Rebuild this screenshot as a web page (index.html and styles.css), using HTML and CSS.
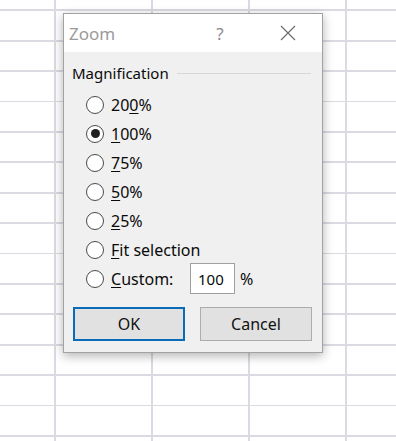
FILE: index.html
```html
<!DOCTYPE html>
<html>
<head>
    <title>Zoom</title>
    <meta charset="UTF-8">
    <link rel="stylesheet" href="styles.css">
</head>
<body>
    <div class="sheet">
        <div class="dialog">
            <div class="titlebar">
                <span class="title">Zoom</span>
                <span class="help">?</span>
                <svg class="close" width="16" height="16" viewBox="0 0 16 16">
                    <path d="M1 1L15 15M15 1L1 15" stroke="#6d6d6d" stroke-width="1.2" fill="none"/>
                </svg>
            </div>
            <div class="content">
                <div class="group-head">
                    <span class="group-title">Magnification</span>
                    <span class="rule"></span>
                </div>
                <div class="options">
                    <div class="option"><span class="radio"></span><span>20<u>0</u>%</span></div>
                    <div class="option"><span class="radio checked"></span><span><u>1</u>00%</span></div>
                    <div class="option"><span class="radio"></span><span><u>7</u>5%</span></div>
                    <div class="option"><span class="radio"></span><span><u>5</u>0%</span></div>
                    <div class="option"><span class="radio"></span><span><u>2</u>5%</span></div>
                    <div class="option"><span class="radio"></span><span><u>F</u>it selection</span></div>
                    <div class="option">
                        <span class="radio"></span>
                        <span class="custom-label"><u>C</u>ustom:</span>
                        <span class="num-box">100</span>
                        <span class="pct">%</span>
                    </div>
                </div>
                <div class="buttons">
                    <button class="btn btn-default">OK</button>
                    <button class="btn">Cancel</button>
                </div>
            </div>
        </div>
    </div>
</body>
</html>
```

FILE: styles.css
```css
body {
    margin: 0;
    font-family: 'Noto Sans', 'Open Sans', sans-serif;
    background-color: white;
}

/* spreadsheet grid behind the dialog */
.sheet {
    width: 396px;
    height: 441px;
    overflow: hidden;
    background-color: white;
    background-image:
        repeating-linear-gradient(to right, #dadae2 -43px, #dadae2 -41px, transparent -41px, transparent 54px),
        repeating-linear-gradient(to bottom, #dadae2 -21.1px, #dadae2 -19.3px, transparent -19.3px, transparent 9.3px);
    padding-top: 13px;
    box-sizing: border-box;
}

.dialog {
    margin-left: 63px;
    width: 260px;
    height: 340px;
    box-sizing: border-box;
    border: 1px solid #a2a2a2;
    background-color: #f0f0f0;
    box-shadow: 0 3px 10px rgba(0,0,0,0.3);
}

.titlebar {
    height: 38px;
    background-color: white;
    display: flex;
    align-items: center;
    padding: 0 26px 0 5px;
}

.title {
    flex: 1;
    color: #9a9a9a;
    font-size: 17px;
}

.help {
    width: 20px;
    text-align: center;
    color: #8a8a8a;
    font-size: 17px;
    margin-right: 50px;
}

.close {
    display: block;
}

.content {
    padding: 10px 10px 0 8px;
}

.group-head {
    display: flex;
    align-items: center;
    height: 22px;
}

.group-title {
    font-size: 15px;
    color: #0a0a0a;
}

.rule {
    flex: 1;
    height: 1px;
    background-color: #d6d6d6;
    margin-left: 8px;
    margin-right: 1px;
}

.options {
    margin-top: 6px;
    padding-left: 14px;
}

.option {
    display: flex;
    align-items: center;
    height: 29px;
    font-size: 16px;
    color: #0a0a0a;
}

.option u {
    text-decoration-thickness: 1px;
    text-underline-offset: 2px;
}

.radio {
    width: 16px;
    height: 16px;
    border: 1.5px solid #4a4a4a;
    border-radius: 50%;
    background-color: white;
    margin-right: 7px;
    position: relative;
    flex-shrink: 0;
}

.radio.checked::after {
    content: '';
    position: absolute;
    left: 3.5px;
    top: 3.5px;
    width: 9px;
    height: 9px;
    border-radius: 50%;
    background-color: #222;
}

.custom-label {
    width: 79px;
}

.num-box {
    width: 45px;
    height: 31px;
    box-sizing: border-box;
    border: 1px solid #a0a0a0;
    background-color: white;
    padding: 5px 0 0 7px;
    font-size: 15px;
}

.pct {
    margin-left: 5px;
}

.buttons {
    display: flex;
    justify-content: space-between;
    margin-top: 14px;
    padding-left: 1px;
}

.btn {
    width: 112px;
    height: 34px;
    font-family: inherit;
    font-size: 16px;
    color: #111;
    background-color: #e1e1e1;
    border: 1px solid #adadad;
    padding: 0;
}

.btn-default {
    border: 2px solid #0a6cb9;
}
```
